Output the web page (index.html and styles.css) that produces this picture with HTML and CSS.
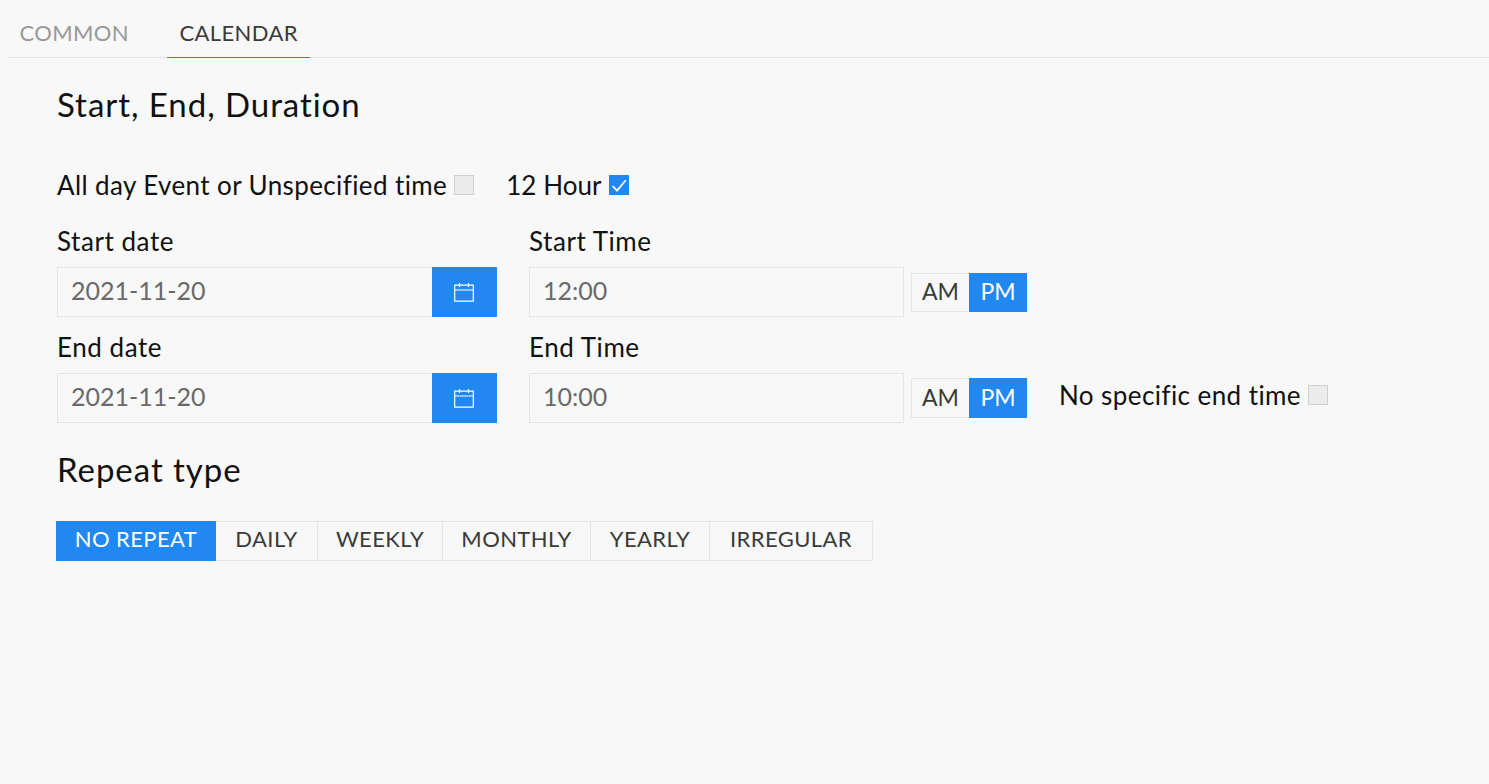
FILE: index.html
```html
<!DOCTYPE html>
<html lang="en">
<head>
<meta charset="utf-8">
<title>Calendar</title>
<link rel="stylesheet" href="styles.css">
</head>
<body>
<nav class="tabs">
  <a class="tab">COMMON</a>
  <a class="tab tab-active">CALENDAR</a>
</nav>
<main class="content">
  <h2 class="heading heading-first">Start, End, Duration</h2>
  <div class="check-row">
    <label class="check"><span>All day Event or Unspecified time</span><i class="box"></i></label>
    <label class="check check-hour"><span>12 Hour</span><i class="box box-on"><svg viewBox="0 0 20 20" width="20" height="20"><path d="M3.7 11l4.3 4.6 8.8-10.4" fill="none" stroke="#fff" stroke-width="1.7"/></svg></i></label>
  </div>
  <div class="field-row">
    <div class="field">
      <div class="label">Start date</div>
      <div class="date-group">
        <div class="input input-date">2021-11-20</div>
        <div class="cal-btn"><svg viewBox="0 0 20 20" width="20" height="20"><path d="M.7 3.2h18.6v16H.7zM.7 8h18.6M5.5 1v4M14.5 1v4" fill="none" stroke="#fff" stroke-width="1.2"/></svg></div>
      </div>
    </div>
    <div class="field">
      <div class="label">Start Time</div>
      <div class="time-group">
        <div class="input input-time">12:00</div>
        <div class="ampm"><span class="seg">AM</span><span class="seg seg-on">PM</span></div>
      </div>
    </div>
  </div>
  <div class="field-row">
    <div class="field">
      <div class="label">End date</div>
      <div class="date-group">
        <div class="input input-date">2021-11-20</div>
        <div class="cal-btn"><svg viewBox="0 0 20 20" width="20" height="20"><path d="M.7 3.2h18.6v16H.7zM.7 8h18.6M5.5 1v4M14.5 1v4" fill="none" stroke="#fff" stroke-width="1.2"/></svg></div>
      </div>
    </div>
    <div class="field">
      <div class="label">End Time</div>
      <div class="time-group">
        <div class="input input-time">10:00</div>
        <div class="ampm ampm-tall"><span class="seg">AM</span><span class="seg seg-on">PM</span></div>
        <label class="check check-end"><span>No specific end time</span><i class="box"></i></label>
      </div>
    </div>
  </div>
  <h2 class="heading heading-repeat">Repeat type</h2>
  <div class="repeat">
    <span class="rbtn rbtn-on">NO REPEAT</span><span class="rbtn">DAILY</span><span class="rbtn">WEEKLY</span><span class="rbtn">MONTHLY</span><span class="rbtn">YEARLY</span><span class="rbtn">IRREGULAR</span>
  </div>
</main>
</body>
</html>
```
FILE: styles.css
```css
* { box-sizing: border-box; }
html, body { margin: 0; height: 100%; }
body {
  background: #f8f8f8;
  font-family: "Lato", "Noto Sans", sans-serif;
  color: #111;
  overflow: hidden;
}
.tabs {
  display: flex;
  height: 58px;
  margin-left: 7px;
  border-bottom: 1px solid #e5e5e5;
}
.tab {
  width: 143px;
  height: 58px;
  padding: 20px 0 0 12.5px;
  font-size: 22px;
  line-height: 26px;
  letter-spacing: .38px;
  color: #999;
  margin-right: 17px;
}
.tab-active { color: #3a3a3a; border-bottom: 1px solid #2f80d8; }
.content { padding-left: 57px; }
.heading { margin: 0; padding-bottom: 2px; font-weight: 400; font-size: 33px; line-height: 38px; letter-spacing: .95px; color: #111; }
.heading-first { margin-top: 27px; }
.heading-repeat { margin-top: 27px; }
.check-row { display: flex; gap: 32px; margin-top: 40px; height: 40px; }
.check { display: flex; align-items: center; gap: 7px; font-size: 26px; letter-spacing: .39px; }
.check-hour { letter-spacing: .05px; }
.box {
  display: block;
  width: 20px;
  height: 20px;
  background: #ececec;
  border: 1px solid #d0d0d0;
}
.box svg { display: block; }
.box-on { background: #2088f0; border: 0; }
.field-row { display: flex; gap: 32px; }
.field-row + .field-row { margin-top: 14px; }
.check-row + .field-row { margin-top: 20px; }
.label { font-size: 26px; line-height: 32px; height: 30px; margin-bottom: 12px; letter-spacing: .55px; }
.date-group, .time-group { display: flex; align-items: center; height: 50px; }
.input {
  height: 50px;
  border: 1px solid #e5e5e5;
  padding-left: 13px;
  font-size: 25px;
  line-height: 44px;
  color: #6a6a6a;
}
.input-date { width: 375px; border-right: 0; }
.input-time { width: 375px; }
.cal-btn {
  width: 65px;
  height: 50px;
  padding-right: 1px;
  background: #2088f0;
  display: flex;
  align-items: center;
  justify-content: center;
}
.ampm { display: flex; margin-left: 7px; height: 39px; }
.ampm-tall { height: 40px; }
.seg {
  width: 58px;
  display: flex;
  align-items: center;
  justify-content: center;
  padding-bottom: 2px;
  border: 1px solid #e5e5e5;
  border-right: 0;
  font-size: 23px;
  color: #3a3a3a;
}
.seg-on { background: #2088f0; color: #fff; border: 0; }
.check-end { margin-left: 32px; margin-top: -7px; letter-spacing: .42px; }
.repeat { display: flex; margin-top: 31px; margin-left: -1px; height: 40px; }
.rbtn {
  display: flex;
  align-items: center;
  justify-content: center;
  padding-bottom: 6px;
  border: 1px solid #e5e5e5;
  border-left: 0;
  font-size: 22px;
  letter-spacing: .4px;
  color: #3a3a3a;
}
.rbtn:nth-child(1) { width: 160px; }
.rbtn:nth-child(2) { width: 102px; }
.rbtn:nth-child(3) { width: 125px; }
.rbtn:nth-child(4) { width: 148px; }
.rbtn:nth-child(5) { width: 119px; }
.rbtn:nth-child(6) { width: 163px; }
.rbtn-on { background: #2088f0; color: #fff; border: 0; }
```
